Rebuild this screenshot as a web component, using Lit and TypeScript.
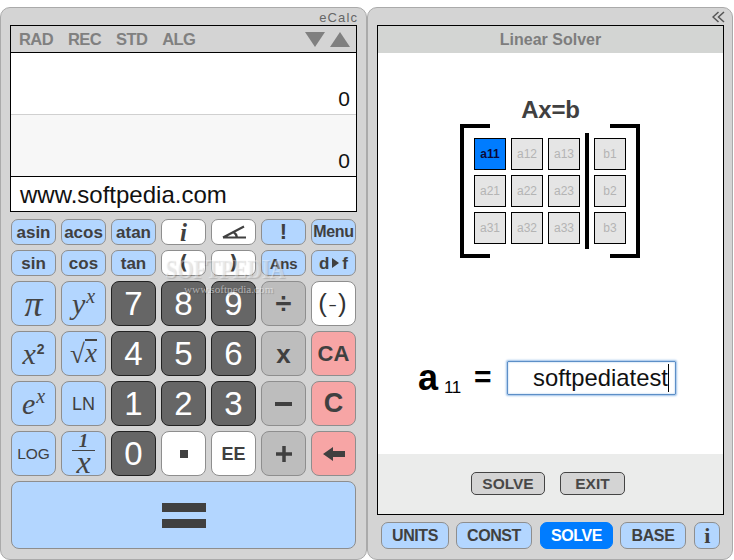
import { LitElement, html, css } from "lit";
import { customElement } from "lit/decorators.js";

type Key = { t?: unknown; c: string; f?: string };

const sup = (a: string, b: string) => html`<span class="m">${a}<sup>${b}</sup></span>`;

const small: Key[] = [
  { t: "asin", c: "blue" }, { t: "acos", c: "blue" }, { t: "atan", c: "blue" },
  { t: html`<span class="ital">i</span>`, c: "white" },
  { t: html`<svg width="26" height="18" viewBox="0 0 26 18"><path d="M2 14.500L23 3.500M2 14.500H25M12.500 9Q15.500 11 16 14.500" fill="none" stroke="#404040" stroke-width="2.200"/></svg>`, c: "white" },
  { t: "!", c: "blue", f: "bang" }, { t: "Menu", c: "blue", f: "menu" },
  { t: "sin", c: "blue" }, { t: "cos", c: "blue" }, { t: "tan", c: "blue" },
  { t: html`<span class="paren">(</span>`, c: "white" },
  { t: html`<span class="paren">)</span>`, c: "white" },
  { t: "Ans", c: "blue", f: "ans" },
  { t: html`d<svg class="tri" width="9" height="12" viewBox="0 0 9 12"><path d="M1 1L8 6L1 11Z" fill="#404040"/></svg>f`, c: "blue" },
];

const large: Key[] = [
  { t: html`<span class="m pi">π</span>`, c: "blue" },
  { t: sup("y", "x"), c: "blue" },
  { t: "7", c: "dark" }, { t: "8", c: "dark" }, { t: "9", c: "dark" },
  { t: "÷", c: "gray", f: "op" },
  { t: html`<span class="neg">(<span class="negm">–</span>)</span>`, c: "white" },
  { t: html`<span class="m">x<sup class="two">2</sup></span>`, c: "blue" },
  { t: html`<span class="m root">√<span class="over">x</span></span>`, c: "blue" },
  { t: "4", c: "dark" }, { t: "5", c: "dark" }, { t: "6", c: "dark" },
  { t: "x", c: "gray", f: "x" },
  { t: "CA", c: "red", f: "ca" },
  { t: sup("e", "x"), c: "blue" },
  { t: "LN", c: "blue", f: "ln" },
  { t: "1", c: "dark" }, { t: "2", c: "dark" }, { t: "3", c: "dark" },
  { t: html`<span class="bar"></span>`, c: "gray" },
  { t: "C", c: "red", f: "cc" },
  { t: "LOG", c: "blue", f: "log" },
  { t: html`<span class="frac"><span class="num">1</span><span class="den">x</span></span>`, c: "blue" },
  { t: "0", c: "dark" },
  { t: html`<span class="dot"></span>`, c: "white" },
  { t: "EE", c: "white", f: "ee" },
  { t: html`<svg width="16" height="16" viewBox="0 0 16 16"><path d="M0 8H16M8 0V16" stroke="#404040" stroke-width="3.500"/></svg>`, c: "gray" },
  { t: html`<svg width="22" height="16" viewBox="0 0 22 16"><path d="M0 8L10 1V5H22V11H10V15Z" fill="#404040"/></svg>`, c: "red" },
];

const matrix = ["a11", "a12", "a13", "a21", "a22", "a23", "a31", "a32", "a33"];

@customElement("app-root")
export class AppRoot extends LitElement {
  static styles = css`
    :host { display: flex; width: 734px; height: 560px; padding-top: 7px; box-sizing: border-box; background: #fff; font-family: "Liberation Sans", Arial, sans-serif; overflow: hidden; position: relative; }
    .panel { background: #d4d4d4; border: 1px solid #aaa; border-radius: 10px; box-sizing: border-box; height: 553px; }
    .left { width: 367px; padding: 0 8px 0 9px; }
    .right { width: 366px; padding: 0 8px 0 9px; }
    .brand { height: 17px; text-align: right; font-size: 13px; line-height: 19px; color: #666; letter-spacing: 1.100px; }
    .display { border: 1px solid #000; height: 187px; box-sizing: border-box; width: 347px; display: flex; flex-direction: column; background: #fff; }
    .status { height: 26px; flex: none; background: #d4d4d4; border-bottom: 1px solid #000; display: flex; align-items: center; padding: 0 6px 0 8px; gap: 15px; font-weight: 700; font-size: 16.500px; letter-spacing: -0.600px; color: #808080; }
    .status .arrows { margin-left: auto; display: flex; gap: 5px; }
    .line { flex: none; font-size: 21px; padding-right: 6px; display: flex; align-items: flex-end; justify-content: flex-end; box-sizing: border-box; line-height: 24px; color: #111; padding-bottom: 3px; height: 62px; }
    .line.a { border-bottom: 1px solid #d0d0d0; }
    .line.b { background: #f7f7f7; border-bottom: 1px solid #000; }
    .input { flex: 1; font-size: 24px; line-height: 36px; padding-left: 9px; color: #111; }
    .smallkeys { display: grid; grid-template-columns: repeat(7, 45px); grid-auto-rows: 26px; gap: 5px; margin-top: 7px; margin-left: 1px; }
    .largekeys { display: grid; grid-template-columns: repeat(7, 45px); grid-auto-rows: 45px; gap: 5px; margin-top: 5px; margin-left: 1px; }
    .key { box-sizing: border-box; border: 1px solid #8e8e8e; border-radius: 7px; display: flex; align-items: center; justify-content: center; color: #404040; font-weight: 700; font-size: 17px; white-space: nowrap; line-height: 1; }
    .largekeys .key { border-radius: 8px; font-size: 22px; }
    .blue { background: #b3d6ff; }
    .white { background: #fff; }
    .gray { background: #bdbdbd; }
    .red { background: #f7a5a5; }
    .largekeys .dark { background: #666; border-color: #222; color: #fff; font-weight: 400; font-size: 33px; }
    .smallkeys .menu { font-size: 16px; letter-spacing: -0.300px; }
    .smallkeys .ans { font-size: 15px; letter-spacing: -0.200px; }
    .smallkeys .bang { font-size: 22px; }
    .tri { margin: 0 2px; }
    .ital { font-family: "Liberation Serif", serif; font-style: italic; font-weight: 700; font-size: 25px; }
    .paren { font-family: "DejaVu Sans", sans-serif; font-size: 19px; font-weight: 700; line-height: 20px; transform: translateY(-1px); }
    .m { font-family: "Liberation Serif", serif; font-style: italic; font-weight: 400; font-size: 30px; line-height: 30px; color: #444; display: inline-flex; align-items: flex-start; }
    .m sup { font-size: 20px; line-height: 20px; margin-left: 1px; margin-top: -3px; }
    .m sup.two { font-family: "Liberation Sans", sans-serif; font-style: normal; font-weight: 700; font-size: 14px; margin-top: 0; }
    .m.pi { font-size: 36px; }
    .m.root { font-size: 27px; }
    .over { border-top: 2px solid #444; line-height: 24px; }
    .neg { font-weight: 400; font-size: 26px; letter-spacing: 2px; transform: translateY(-1px); color: #333; }
    .negm { font-size: 13px; vertical-align: 3px; font-weight: 700; }
    .largekeys .key.op { font-size: 29px; }
    .largekeys .key.x { font-size: 26px; }
    .largekeys .key.ca { font-size: 22px; }
    .largekeys .key.cc { font-size: 27px; }
    .largekeys .key.ln { font-weight: 400; font-size: 18px; }
    .largekeys .key.log { font-weight: 400; font-size: 15.500px; }
    .largekeys .key.ee { font-size: 18px; }
    .bar { width: 17px; height: 4px; background: #404040; }
    .dot { width: 8px; height: 8px; background: #404040; }
    .frac { display: flex; flex-direction: column; align-items: center; font-family: "Liberation Serif", serif; font-style: italic; font-weight: 400; color: #444; }
    .num { font-size: 19px; line-height: 16px; font-weight: 700; padding-bottom: 1px; }
    .den { font-size: 32px; line-height: 23px; border-top: 1px solid #444; padding: 0 4px; }
    .equals { box-sizing: border-box; margin-top: 5px; margin-left: 1px; height: 68px; width: 345px; background: #b3d6ff; border: 1px solid #8e8e8e; border-radius: 8px; display: flex; flex-direction: column; align-items: center; justify-content: center; gap: 7px; }
    .equals i { display: block; width: 44px; height: 9px; background: #404040; }
    .right .brand { display: flex; justify-content: flex-end; align-items: flex-start; padding: 3px 0 0; box-sizing: border-box; }
    .chev { margin-right: -1px; }
    .solver { border: 1px solid #000; box-sizing: border-box; width: 347px; height: 490px; background: #fff; display: flex; flex-direction: column; }
    .title { height: 27px; flex: none; background: #d3d5d3; text-align: center; font-weight: 700; font-size: 16px; line-height: 28px; color: #7d7d7d; }
    .work { flex: 1; display: flex; flex-direction: column; align-items: center; min-height: 0; }
    .eq { margin-top: 43px; font-size: 24px; font-weight: 700; color: #404040; line-height: 28px; height: 28px; letter-spacing: -0.200px; }
    .matrix { position: relative; width: 180px; height: 134px; box-sizing: border-box; padding: 14px 0 0 14px; display: flex; margin-right: 1px; }
    .brk { position: absolute; top: 0; bottom: 0; width: 30px; border-top: 4px solid #000; border-bottom: 4px solid #000; box-sizing: border-box; }
    .brk.l { left: 0; }
    .brk.r { right: 0; }
    .brk.l::before, .brk.r::before { content: ""; position: absolute; top: 0; bottom: 0; width: 4px; background: #000; }
    .brk.l::before { left: 0; }
    .brk.r::before { right: 0; }
    .cells { display: grid; grid-template-columns: repeat(3, 32px); grid-auto-rows: 32px; gap: 5px; }
    .divider { width: 4px; height: 116px; background: #000; margin: -5px 5px 0 5px; }
    .cols { display: grid; grid-template-columns: 32px; grid-auto-rows: 32px; gap: 5px; }
    .cell { box-sizing: border-box; border: 1px solid #000; background: #e5e5e5; color: #b4b4b4; font-size: 12px; display: flex; align-items: center; justify-content: center; }
    .cell.active { background: #007cff; color: #0a0a3a; font-weight: 700; }
    .entry { margin-top: 103px; display: flex; align-items: flex-start; width: 345px; height: 60px; flex: none; }
    .var { margin-left: 40px; font-weight: 700; font-size: 36px; line-height: 34px; color: #000; width: 26px; }
    .sub { font-size: 17px; line-height: 20px; margin-top: 17px; width: 30px; color: #000; letter-spacing: -0.500px; }
    .eqs { font-size: 30px; font-weight: 700; line-height: 30px; width: 33px; color: #000; margin-top: 1px; }
    .field { box-sizing: border-box; width: 169px; height: 34px; border: 1px solid #5d8fc7; box-shadow: 0 0 2px 1px #9cc0e8, inset 0 0 2px #9cc0e8; border-radius: 1px; font-size: 23.800px; padding-left: 25px; color: #111; white-space: nowrap; display: flex; align-items: center; }
    .caret { display: inline-block; width: 1px; height: 28px; background: #000; }
    .foot { height: 60px; flex: none; background: #ebeceb; display: flex; justify-content: center; gap: 15px; padding: 18px 5px 0 0; box-sizing: border-box; margin-top: auto; }
    .fbtn { box-sizing: border-box; height: 23px; background: #d4d4d4; border: 1px solid #444; border-radius: 5px; font-weight: 700; font-size: 15.500px; color: #484848; display: flex; align-items: center; justify-content: center; }
    .fbtn.solve { width: 74px; }
    .fbtn.exit { width: 65px; }
    .tabs { display: flex; margin-top: 7px; padding-left: 4px; gap: 7px; }
    .tab { box-sizing: border-box; height: 27px; background: #b3d6ff; border: 1px solid #8e8e8e; border-radius: 7px; font-weight: 700; font-size: 16px; letter-spacing: -0.400px; color: #404040; display: flex; align-items: center; justify-content: center; }
    .tab.on { background: #007cff; border-color: #007cff; color: #fff; width: 73px; margin-left: 1px; }
    .tab.units { width: 68px; }
    .tab.const { width: 76px; }
    .tab.base { width: 66px; }
    .tab.info { font-family: "Liberation Serif", serif; font-size: 22px; width: 26px; margin-left: 1px; }
    .wm { position: absolute; pointer-events: none; font-family: "Liberation Serif", serif; }
    .wm1 { left: 165px; top: 254px; font-size: 21px; font-weight: 700; transform: scaleY(1.250); transform-origin: top left; color: rgba(255,255,255,.4); text-shadow: 1px 1px 1px rgba(0,0,0,.15); }
    .wm2 { left: 184px; top: 283px; font-size: 11.200px; color: rgba(255,255,255,.5); text-shadow: 1px 1px 1px rgba(0,0,0,.2); }
  `;

  private keys(list: Key[]) {
    return list.map((k) => html`<div class="key ${k.c} ${k.f ?? ""}">${k.t}</div>`);
  }

  render() {
    return html`
      <div class="panel left">
        <div class="brand">eCalc</div>
        <div class="display">
          <div class="status">
            <span>RAD</span><span>REC</span><span>STD</span><span>ALG</span>
            <span class="arrows">
              <svg width="20" height="15" viewBox="0 0 20 15"><path d="M0 0H20L10 15Z" fill="#808080"/></svg>
              <svg width="20" height="15" viewBox="0 0 20 15"><path d="M0 15H20L10 0Z" fill="#808080"/></svg>
            </span>
          </div>
          <div class="line a">0</div>
          <div class="line b">0</div>
          <div class="input">www.softpedia.com</div>
        </div>
        <div class="smallkeys">${this.keys(small)}</div>
        <div class="largekeys">${this.keys(large)}</div>
        <div class="equals"><i></i><i></i></div>
      </div>
      <div class="panel right">
        <div class="brand">
          <svg class="chev" width="13" height="12" viewBox="0 0 13 12"><path d="M6.500 1L1 6L6.500 11M12 1L6.500 6L12 11" fill="none" stroke="#555" stroke-width="1.500"/></svg>
        </div>
        <div class="solver">
          <div class="title">Linear Solver</div>
          <div class="work">
            <div class="eq">Ax=b</div>
            <div class="matrix">
              <div class="brk l"></div><div class="brk r"></div>
              <div class="cells">
                ${matrix.map((c, i) => html`<div class="cell ${i === 0 ? "active" : ""}">${c}</div>`)}
              </div>
              <div class="divider"></div>
              <div class="cols">
                ${["b1", "b2", "b3"].map((c) => html`<div class="cell">${c}</div>`)}
              </div>
            </div>
            <div class="entry">
              <div class="var">a</div>
              <div class="sub">11</div>
              <div class="eqs">=</div>
              <div class="field">softpediatest<span class="caret"></span></div>
            </div>
          </div>
          <div class="foot">
            <div class="fbtn solve">SOLVE</div>
            <div class="fbtn exit">EXIT</div>
          </div>
        </div>
        <div class="tabs">
          <div class="tab units">UNITS</div>
          <div class="tab const">CONST</div>
          <div class="tab on">SOLVE</div>
          <div class="tab base">BASE</div>
          <div class="tab info">i</div>
        </div>
      </div>
      <div class="wm wm1">SOFTPEDIA</div>
      <div class="wm wm2">www.softpedia.com</div>
    `;
  }
}
